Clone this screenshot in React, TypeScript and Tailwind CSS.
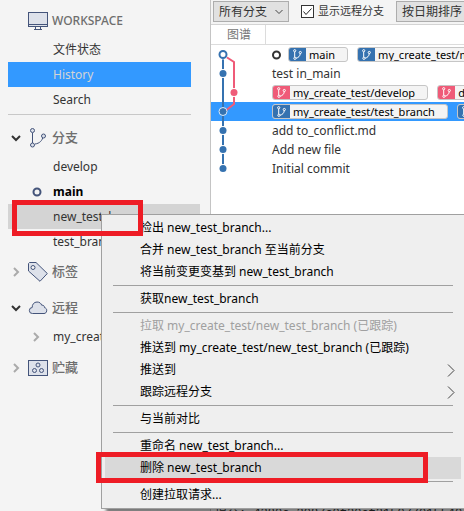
import type { ReactNode } from "react";

const MonitorIcon = () => (
  <svg width="20" height="18" viewBox="0 0 20 18" fill="none" stroke="#44547a">
    <rect x="0.5" y="0.5" width="19" height="14" fill="#dde1ea" />
    <path d="M0 12.5h20M7.5 15v2M12.5 15v2M6 17.5h8" />
  </svg>
);

const BranchIcon = () => (
  <svg width="20" height="20" viewBox="0 0 20 20" fill="none" stroke="#44547a">
    <path d="M4.5 5v10M15 8.5c-.5 4-3.500 7-8 7.500" />
    <circle cx="4.500" cy="2.500" r="2" fill="#dde1ea" />
    <circle cx="4.500" cy="17" r="2" fill="#dde1ea" />
    <circle cx="15.500" cy="8" r="2" fill="#dde1ea" />
  </svg>
);

const TagIcon = () => (
  <svg width="20" height="20" viewBox="0 0 20 20" fill="#dde1ea" stroke="#44547a">
    <path d="M.5 1.500 1.500.5h6.500L19.300 11.500 12 19.300.5 9z" strokeLinejoin="round" />
    <circle cx="5" cy="5.500" r="2" fill="#f4f4f4" />
  </svg>
);

const CloudIcon = () => (
  <svg width="20" height="14" viewBox="0 0 20 14" fill="#dde1ea" stroke="#44547a">
    <path d="M4.500 12.500a3 3 0 0 1-.3-6C4 3.500 6 1 9 1c2.500 0 4 1.200 4.700 3.200 1.800-.2 2.800.8 2.900 2.500 1.500.3 2.300 1.500 2.100 3.100-.2 1.700-1.200 2.700-2.700 2.700z" />
  </svg>
);

const StashIcon = () => (
  <svg width="20" height="16" viewBox="0 0 20 16" fill="#dde1ea" stroke="#44547a">
    <rect x="0.5" y="0.5" width="19" height="15" />
    <circle cx="10" cy="5" r="2" />
    <circle cx="6.500" cy="10.500" r="2" />
    <circle cx="13.500" cy="10.500" r="2" />
  </svg>
);

const Chevron = ({ open }: { open?: boolean }) => (
  <svg width="10" height="10" viewBox="0 0 10 10" fill="none" strokeWidth="2">
    {open ? (
      <path d="M1 3l4 4 4-4" stroke="#333" />
    ) : (
      <path d="M3 1l4 4-4 4" stroke="#aaa" />
    )}
  </svg>
);

type SectionProps = {
  title: string;
  icon: ReactNode;
  open?: boolean;
};

const SectionTitle = ({ title, icon, open }: SectionProps) => (
  <button className="flex h-6 w-full items-center pl-[3px] text-[13px] font-medium text-[#6e6e6e]">
    <Chevron open={open} />
    <span className="ml-[7px] flex w-6 items-center">{icon}</span>
    {title}
  </button>
);

type NavItemProps = {
  children: ReactNode;
  className?: string;
};

const NavItem = ({ children, className = "text-[#333]" }: NavItemProps) => (
  <li>
    <button className={`flex h-[25px] w-full items-center pl-[45px] ${className}`}>
      {children}
    </button>
  </li>
);

const Sidebar = () => (
  <nav className="w-[211px] shrink-0 border-r border-[#c4c4c4] bg-[#f4f4f4] pt-[9px] pr-[10px] pl-2">
    <h2 className="flex h-6 items-center gap-1 pl-5 text-xs font-medium text-[#6e6e6e]">
      <MonitorIcon />
      WORKSPACE
    </h2>
    <ul className="mt-1 mr-[9px] border-b border-[#c8c8c8] pb-[2px]">
      <NavItem>文件状态</NavItem>
      <NavItem className="bg-[#3399ff] text-[#d4d4d4]">History</NavItem>
      <NavItem>Search</NavItem>
    </ul>

    <div className="mt-[11px]">
      <SectionTitle title="分支" icon={<BranchIcon />} open />
      <ul className="mt-1">
        <NavItem>develop</NavItem>
        <NavItem className="relative font-bold text-black">
          <svg className="absolute left-6" width="10" height="10" viewBox="0 0 10 10">
            <circle cx="5" cy="5" r="3.500" fill="none" stroke="#44547a" strokeWidth="2" />
          </svg>
          main
        </NavItem>
        <NavItem className="bg-[#d4d4d4] text-[#333]">new_test_branch</NavItem>
        <NavItem>test_branch</NavItem>
      </ul>
    </div>

    <div className="mt-[6px]">
      <SectionTitle title="标签" icon={<TagIcon />} />
    </div>
    <div className="mt-3">
      <SectionTitle title="远程" icon={<CloudIcon />} open />
      <ul className="mt-1">
        <NavItem className="relative text-[#333]">
          <span className="absolute left-[23px]">
            <Chevron />
          </span>
          my_create_test
        </NavItem>
      </ul>
    </div>
    <div className="mt-[7px]">
      <SectionTitle title="贮藏" icon={<StashIcon />} />
    </div>
  </nav>
);

const Toolbar = () => (
  <div className="flex h-[25px] shrink-0 items-start border-b border-[#d4d4d4] bg-[#f4f4f4] pt-px pl-[2px]">
    <div className="relative shrink-0">
      <select
        aria-label="分支"
        className="h-[21px] w-[76px] appearance-none border border-[#adadad] bg-[#e1e1e1] pl-[5px] text-xs leading-none text-[#333]"
      >
        <option>所有分支</option>
      </select>
      <svg
        className="pointer-events-none absolute top-2 right-[6px]"
        width="8"
        height="6"
        viewBox="0 0 8 6"
        fill="none"
        stroke="#444"
      >
        <path d="M.5 1 4 4.500 7.500 1" />
      </svg>
    </div>
    <label className="relative ml-3 flex h-[21px] shrink-0 items-center gap-1 text-[11px] text-[#333]">
      <input
        type="checkbox"
        defaultChecked
        className="peer h-[13px] w-[13px] appearance-none border border-[#333] bg-white"
      />
      <svg
        className="pointer-events-none invisible absolute left-0 peer-checked:visible"
        width="13"
        height="13"
        viewBox="0 0 13 13"
        fill="none"
        stroke="#222"
      >
        <path d="M2.500 6.500 5 9.500 10.500 3.500" />
      </svg>
      显示远程分支
    </label>
    <button className="ml-3 flex h-[21px] w-[90px] shrink-0 items-center border border-[#adadad] bg-[#e1e1e1] pl-[5px] text-[#333]">
      按日期排序
    </button>
  </div>
);

const Badge = ({ name, remote }: { name: string; remote?: boolean }) => (
  <span className="inline-flex h-[15px] shrink-0 items-stretch overflow-hidden rounded-[3px] border border-[#c6c6c6] bg-[#f4f4f4] text-[11px] text-black">
    <span
      className={`flex w-[17px] items-center justify-center ${remote ? "bg-[#ef5b78]" : "bg-[#3572b0]"}`}
    >
      <svg width="9" height="11" viewBox="0 0 9 11" fill="none" stroke="#fff">
        <path d="M1.700 3v5M7.300 4.500c-.2 2.500-1.800 4.200-4.300 4.700" />
        <circle cx="1.700" cy="1.700" r="1.100" />
        <circle cx="1.900" cy="9.300" r="1.100" />
        <circle cx="7.300" cy="3.500" r="1.100" />
      </svg>
    </span>
    <span className="pr-3 pl-[3px] leading-[13px]">{name}</span>
  </span>
);

type Commit = {
  message?: string;
  head?: boolean;
  selected?: boolean;
  remote?: boolean;
  refs?: string[];
};

const commits: Commit[] = [
  { head: true, refs: ["main", "my_create_test/main"] },
  { message: "test in_main" },
  { remote: true, refs: ["my_create_test/develop", "develop"] },
  { selected: true, refs: ["my_create_test/test_branch", "test_branch"] },
  { message: "add to_conflict.md" },
  { message: "Add new file" },
  { message: "Initial commit" },
];

const Graph = () => (
  <svg
    className="pointer-events-none absolute top-5 left-0"
    width="54"
    height="133"
    viewBox="0 0 54 133"
    fill="none"
  >
    <path d="M12 10v114" stroke="#3572b0" strokeWidth="2" />
    <path d="M13 10.500 23 17v42L13 67" stroke="#ef5b78" strokeWidth="2" />
    <circle cx="12" cy="9.500" r="5" fill="#fff" />
    <circle cx="12" cy="9.500" r="3.500" fill="#fff" stroke="#3572b0" strokeWidth="2" />
    <circle cx="12" cy="28.500" r="4.500" fill="#fff" />
    <circle cx="12" cy="28.500" r="3.500" fill="#3572b0" />
    <circle cx="23" cy="47.500" r="4.500" fill="#fff" />
    <circle cx="23" cy="47.500" r="3.500" fill="#ef5b78" />
    <circle cx="12" cy="66.500" r="4" fill="#3572b0" stroke="#dbeaf8" />
    <circle cx="12" cy="85.500" r="4.500" fill="#fff" />
    <circle cx="12" cy="85.500" r="3.500" fill="#3572b0" />
    <circle cx="12" cy="104.500" r="4.500" fill="#fff" />
    <circle cx="12" cy="104.500" r="3.500" fill="#3572b0" />
    <circle cx="12" cy="123.500" r="4.500" fill="#fff" />
    <circle cx="12" cy="123.500" r="3.500" fill="#3572b0" />
  </svg>
);

const History = () => (
  <div className="relative shrink-0">
    <table className="w-full table-fixed border-separate border-spacing-0 text-left text-[#333]">
      <thead>
        <tr className="h-5">
          <th className="w-[55px] border-r border-b border-[#dcdcdc] p-0 pl-4 leading-none font-normal text-[#777]">
            图谱
          </th>
          <th className="border-b border-[#dcdcdc] p-0" />
        </tr>
      </thead>
      <tbody>
        {commits.map((commit, index) => (
          <tr key={index} className={commit.selected ? "bg-[#3399ff]" : "bg-white"}>
            <td className="p-0" />
            <td className="overflow-hidden p-0 pl-[6px]">
              <div className="flex h-[19px] items-center gap-[9px] whitespace-nowrap">
                {commit.head && (
                  <svg className="-mr-[3px] shrink-0" width="10" height="10" viewBox="0 0 10 10">
                    <circle cx="4.500" cy="5" r="3.500" fill="none" stroke="#333" strokeWidth="2" />
                  </svg>
                )}
                {commit.refs?.map((name) => (
                  <Badge key={name} name={name} remote={commit.remote} />
                ))}
                {commit.message}
              </div>
            </td>
          </tr>
        ))}
      </tbody>
    </table>
    <Graph />
  </div>
);

const menuGroups = [
  [
    { label: "检出 new_test_branch..." },
    { label: "合并 new_test_branch 至当前分支" },
    { label: "将当前变更变基到 new_test_branch" },
  ],
  [{ label: "获取new_test_branch" }],
  [
    { label: "拉取 my_create_test/new_test_branch (已跟踪)", disabled: true },
    { label: "推送到 my_create_test/new_test_branch (已跟踪)" },
    { label: "推送到", submenu: true },
    { label: "跟踪远程分支", submenu: true },
  ],
  [{ label: "与当前对比" }],
  [
    { label: "重命名 new_test_branch..." },
    { label: "删除 new_test_branch", active: true },
  ],
  [{ label: "创建拉取请求..." }],
] as {
  label: string;
  disabled?: boolean;
  submenu?: boolean;
  active?: boolean;
}[][];

const ContextMenu = () => (
  <div
    role="menu"
    className="absolute top-[214px] -right-px left-[101px] border border-[#a0a0a0] bg-[#efefef] px-[3px] py-[2px] shadow-[5px_4px_3px_rgba(0,0,0,0.5)]"
  >
    {menuGroups.map((group, index) => (
      <div key={index}>
        {index > 0 && <hr className="mx-2 my-[2px] border-[#a0a0a0]" />}
        {group.map((item) => (
          <button
            key={item.label}
            role="menuitem"
            disabled={item.disabled}
            className={`flex h-[22px] w-full items-center justify-between pr-[6px] pl-[35px] text-black disabled:text-[#a0a0a0] ${item.active ? "bg-[#d9d9d9]" : ""}`}
          >
            {item.label}
            {item.submenu && (
              <svg width="8" height="13" viewBox="0 0 8 13" fill="none" stroke="#444">
                <path d="M1 .5l6 6-6 6" />
              </svg>
            )}
          </button>
        ))}
      </div>
    ))}
  </div>
);

const App = () => {
  return (
    <div className="relative flex h-screen overflow-hidden bg-white font-['Noto_Sans','Noto_Sans_CJK_SC',sans-serif] text-xs">
      <Sidebar />
      <main className="flex min-w-0 flex-1 flex-col">
        <Toolbar />
        <History />
        <p className="shrink-0 pt-[328px] pl-1 font-['Liberation_Mono','Noto_Sans_CJK_SC',monospace] text-xs whitespace-nowrap text-[#333]">
          提交: 4380c 2087c0f20cf2150770155407
        </p>
      </main>
      <ContextMenu />
      <div className="pointer-events-none absolute top-[200px] left-3 h-9 w-[131px] border-5 border-[#ee1c25]" />
      <div className="pointer-events-none absolute top-[452px] left-24 h-[31px] w-[332px] border-5 border-[#ee1c25]" />
    </div>
  );
};

export default App;
